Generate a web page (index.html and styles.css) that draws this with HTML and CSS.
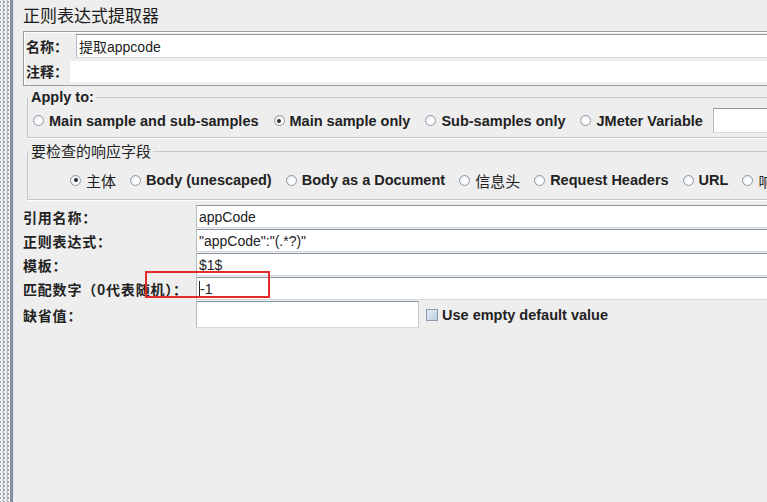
FILE: index.html
```html
<!DOCTYPE html>
<html lang="zh">
<head>
  <meta charset="UTF-8">
  <title>正则表达式提取器</title>
  <link rel="stylesheet" href="styles.css">
</head>
<body>
<div class="splitter"></div>
<div class="edge"></div>
<div class="main">
  <div class="title">正则表达式提取器</div>

  <div class="namebox">
    <div class="nrow">
      <span class="lbl">名称：</span>
      <span class="field name-field">提取appcode</span>
    </div>
    <div class="nrow">
      <span class="lbl">注释：</span>
      <span class="field plain"></span>
    </div>
  </div>

  <fieldset class="group">
    <legend class="bold">Apply to:</legend>
    <div class="radios">
      <label class="opt"><i class="radio"></i>Main sample and sub-samples</label>
      <label class="opt"><i class="radio on"></i>Main sample only</label>
      <label class="opt"><i class="radio"></i>Sub-samples only</label>
      <label class="opt"><i class="radio"></i>JMeter Variable</label>
      <span class="field varfield"></span>
    </div>
  </fieldset>

  <fieldset class="group second">
    <legend class="cn">要检查的响应字段</legend>
    <div class="radios indent">
      <label class="opt"><i class="radio on"></i><span class="cn">主体</span></label>
      <label class="opt"><i class="radio"></i>Body (unescaped)</label>
      <label class="opt"><i class="radio"></i>Body as a Document</label>
      <label class="opt"><i class="radio"></i><span class="cn">信息头</span></label>
      <label class="opt"><i class="radio"></i>Request Headers</label>
      <label class="opt"><i class="radio"></i>URL</label>
      <label class="opt"><i class="radio"></i><span class="cn">响应代码</span></label>
    </div>
  </fieldset>

  <div class="form">
    <span class="lbl">引用名称：</span>
    <span class="field">appCode</span>
    <span class="lbl">正则表达式：</span>
    <span class="field">"appCode":"(.*?)"</span>
    <span class="lbl">模板：</span>
    <span class="field">$1$</span>
    <span class="lbl">匹配数字（0代表随机）：</span>
    <span class="field"><i class="caret"></i>-1</span>
    <span class="lbl">缺省值：</span>
    <div class="lastrow">
      <span class="field short"></span>
      <label class="opt bold"><i class="check"></i>Use empty default value</label>
    </div>
    <div class="mark"></div>
  </div>
</div>
</body>
</html>
```

FILE: styles.css
```css
body {
  margin: 0;
  background: #eeeeee;
  display: flex;
  height: 502px;
  overflow: hidden;
  font-family: "Liberation Sans", "Noto Sans CJK SC", sans-serif;
  color: #1e1e1e;
}

.splitter {
  width: 10px;
  flex: none;
  background-color: #f3f3f3;
  background-image:
    radial-gradient(circle, #9aa3ab 0.8px, transparent 1px),
    radial-gradient(circle, #c9cdd1 0.8px, transparent 1px);
  background-size: 4px 4px, 4px 4px;
  background-position: 6px 0, 1px 2px;
}
.edge {
  width: 3px;
  flex: none;
  background: #87919b;
  border-right: 1px solid #d9e5f1;
}

.main {
  flex: none;
  width: 900px;
  padding: 4px 0 0 9px;
}

.title {
  font-family: "Noto Sans CJK SC", sans-serif;
  font-size: 17px;
  line-height: 22px;
  height: 27px;
  color: #1a1a1a;
}

.lbl {
  font-family: "Noto Sans CJK SC", sans-serif;
  font-weight: 700;
  font-size: 14px;
  letter-spacing: 0.8px;
  color: #222;
  white-space: nowrap;
}
.cn {
  font-family: "Noto Sans CJK SC", sans-serif;
  font-weight: 400;
}
.bold {
  font-weight: 700;
  font-size: 14.5px;
}

.field {
  display: flex;
  align-items: center;
  box-sizing: border-box;
  height: 23px;
  background: #fff;
  border: 1px solid;
  border-color: #8a96a2 #c2c9d0 #d3d9df #b3bac2;
  padding: 0 2px;
  font-size: 14px;
  color: #222;
  white-space: nowrap;
}
.field.plain {
  border: none;
}

/* name/comment box */
.namebox {
  border: 1px solid #9c9c9c;
  box-shadow: inset 1px 1px 0 #fff;
  padding: 1px 0 1px 1px;
}
.nrow {
  display: flex;
  align-items: center;
  height: 25px;
}
.nrow .lbl {
  padding-left: 1px;
  letter-spacing: 0;
}
.nrow:first-child .lbl {
  width: 50px;
  flex: none;
}
.nrow:first-child .field {
  height: 24px;
  flex: 1;
}
.nrow:last-child {
  height: 26px;
}
.nrow:last-child .lbl {
  width: 44px;
  flex: none;
}
.nrow:last-child .field {
  height: 21px;
  flex: 1;
}

/* groups */
.group {
  margin: 3px 0 0 4px;
  padding: 3px 0 4px 5px;
  border: 1px solid #c9c9c9;
  box-shadow: 1px 1px 0 #fff;
  min-width: 0;
}
.group legend {
  margin-left: -5px;
  padding: 0 2px 0 3px;
  line-height: 16px;
  color: #222;
}
.group.second {
  margin-top: 4px;
  padding: 11px 0 10px 5px;
}
.group.second legend {
  font-size: 15px;
  line-height: 18px;
}

.radios {
  display: flex;
  align-items: center;
  gap: 15px;
  height: 25px;
}
.radios.indent {
  padding-left: 37px;
  height: 18px;
  gap: 14px;
}

.opt {
  display: flex;
  align-items: center;
  gap: 5px;
  font-weight: 700;
  font-size: 14.5px;
  color: #222;
  white-space: nowrap;
}
.opt .cn {
  font-size: 15px;
}

.radio {
  width: 11px;
  height: 11px;
  flex: none;
  box-sizing: border-box;
  border-radius: 50%;
  border: 1px solid #8f9aa5;
  background: radial-gradient(circle at 60% 60%, #ffffff 30%, #dbe2e9 100%);
  position: relative;
}
.radio.on::after {
  content: '';
  position: absolute;
  left: 2.5px;
  top: 2.5px;
  width: 4px;
  height: 4px;
  border-radius: 50%;
  background: #2a2a2a;
}

.varfield {
  width: 200px;
  height: 25px;
  margin-left: -5px;
}

.check {
  width: 12px;
  height: 12px;
  flex: none;
  box-sizing: border-box;
  border: 1px solid #8c9aab;
  background: linear-gradient(135deg, #e6eef7, #b9cde2);
}

/* lower form */
.form {
  position: relative;
  display: grid;
  grid-template-columns: 173px 1fr;
  row-gap: 1px;
  margin-top: 5px;
  align-items: center;
}
.lastrow {
  display: flex;
  align-items: center;
  gap: 7px;
}
.field.short {
  width: 223px;
  height: 27px;
}
.lastrow .opt {
  gap: 4px;
}

.caret {
  width: 1px;
  height: 15px;
  background: #222;
}

.mark {
  position: absolute;
  left: 122px;
  top: 66px;
  width: 121px;
  height: 23px;
  border: 2px solid #e22b2b;
}
```
